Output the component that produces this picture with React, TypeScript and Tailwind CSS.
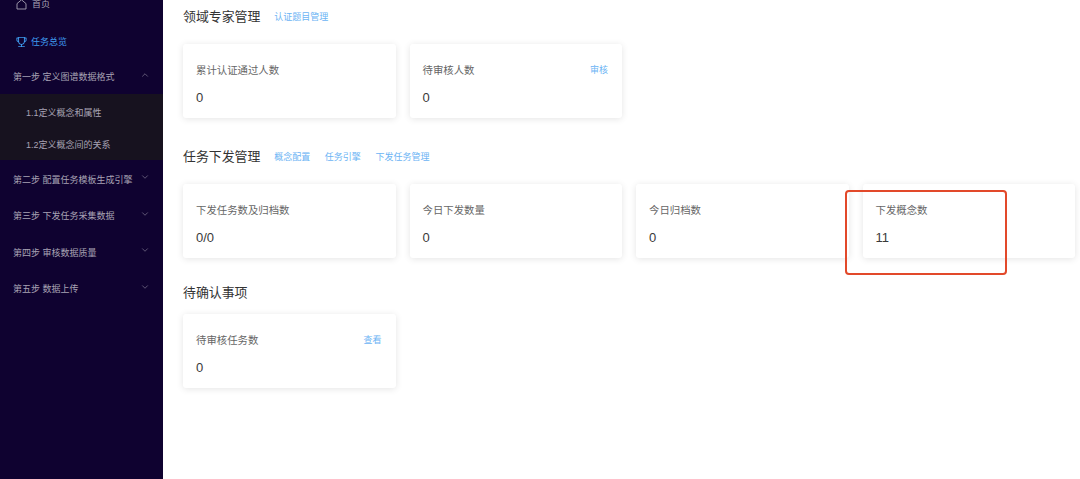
import { AiOutlineTrophy } from 'react-icons/ai';
import { ChevronDown, ChevronUp } from 'lucide-react';

interface StatCardProps {
    label: string;
    value: string;
    action?: string;
}

function StatCard({ label, value, action }: StatCardProps) {
    return (
        <div className="h-[74px] rounded-[3px] bg-white px-[13px] pt-[20px] shadow-[0_1px_7px_rgba(0,0,0,0.11)]">
            <div className="flex h-[14px] items-center justify-between">
                <span className="text-[10.4px] text-[#666666]">{label}</span>
                {action && <span className="-translate-x-px text-[9px] text-[#6cb4f4]">{action}</span>}
            </div>
            <div className="mt-[10px] text-[13px] leading-[20px] text-[#3a3a3a]">{value}</div>
        </div>
    );
}

function SectionTitle({ title, links = [] }: { title: string; links?: string[] }) {
    return (
        <div className="flex h-[18px] items-center">
            <h2 className="text-[12.9px] font-normal text-[#333333]">{title}</h2>
            <div className="ml-[14px] flex translate-y-px gap-[14.5px]">
                {links.map(link => (
                    <span key={link} className="text-[9px] text-[#6cb4f4]">{link}</span>
                ))}
            </div>
        </div>
    );
}

function StepRow({ label, open = false, height = 'h-[36.5px]' }: { label: string; open?: boolean; height?: string }) {
    return (
        <div className={`flex ${height} items-center justify-between pl-[13px] pr-[13px] text-[9px] text-[#a8a3b4]`}>
            <span className="translate-y-px whitespace-nowrap">{label}</span>
            <span className="-translate-y-[2px]">
                {open ? <ChevronUp size={10} strokeWidth={1.25} /> : <ChevronDown size={10} strokeWidth={1.25} />}
            </span>
        </div>
    );
}

function Sidebar() {
    return (
        <aside className="h-full w-[163px] shrink-0 overflow-hidden bg-[#0f0230]">
            <div className="-mt-[14px]">
                <div className="flex h-[36.5px] items-center gap-[5px] pl-[16px] text-[9px] text-[#a8a3b4]">
                    <svg width="11" height="11" viewBox="0 0 11 11" fill="none" stroke="currentColor" strokeWidth="0.9">
                        <path d="M1 10V4.6L5.5 0.8 10 4.6V10H1Z" strokeLinejoin="round" />
                    </svg>
                    <span>首页</span>
                </div>
                <div className="flex h-[36.5px] translate-y-[1.5px] items-center gap-[3px] pl-[15px] text-[9px] text-[#3f9cf0]">
                    <AiOutlineTrophy size={13} />
                    <span>任务总览</span>
                </div>
                <StepRow label="第一步 定义图谱数据格式" open height="h-[35px]" />
                <div className="flex h-[66px] flex-col bg-[#17121f] pl-[26px] text-[9px] text-[#a8a3b4]">
                    <div className="flex h-[36px] translate-y-[1.5px] items-center">1.1定义概念和属性</div>
                    <div className="flex h-[30px] translate-y-[1.5px] items-center pb-[2px]">1.2定义概念间的关系</div>
                </div>
                <div className="mt-[1px]">
                    <StepRow label="第二步 配置任务模板生成引擎" />
                    <StepRow label="第三步 下发任务采集数据" />
                    <StepRow label="第四步 审核数据质量" />
                    <StepRow label="第五步 数据上传" />
                </div>
            </div>
        </aside>
    );
}

export default function App() {
    return (
        <div className="relative flex h-[479px] w-[1080px] overflow-hidden bg-white font-['Liberation_Sans','Noto_Sans_CJK_SC',sans-serif]">
            <Sidebar />
            <main className="flex-1 pl-[20px] pr-[5px] pt-[8px]">
                <SectionTitle title="领域专家管理" links={['认证题目管理']} />
                <div className="mt-[18px] grid grid-cols-4 gap-[14px]">
                    <StatCard label="累计认证通过人数" value="0" />
                    <StatCard label="待审核人数" value="0" action="审核" />
                </div>

                <div className="mt-[30px]">
                    <SectionTitle title="任务下发管理" links={['概念配置', '任务引擎', '下发任务管理']} />
                </div>
                <div className="mt-[18px] grid grid-cols-4 gap-[14px]">
                    <StatCard label="下发任务数及归档数" value="0/0" />
                    <StatCard label="今日下发数量" value="0" />
                    <StatCard label="今日归档数" value="0" />
                    <StatCard label="下发概念数" value="11" />
                </div>

                <div className="mt-[26px]">
                    <SectionTitle title="待确认事项" />
                </div>
                <div className="mt-[12px] grid grid-cols-4 gap-[14px]">
                    <StatCard label="待审核任务数" value="0" action="查看" />
                </div>
            </main>
            {/* annotation drawn over the screenshot */}
            <div className="absolute left-[845px] top-[190px] h-[85px] w-[162px] rounded-[4px] border-2 border-[#e2492a]" />
        </div>
    );
}
